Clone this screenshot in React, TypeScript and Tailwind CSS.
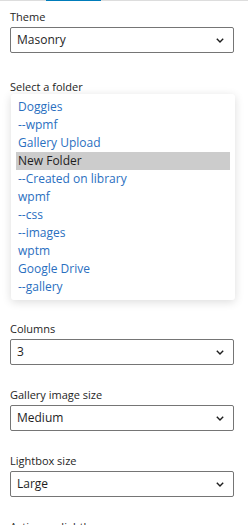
const folders = [
  'Doggies',
  '--wpmf',
  'Gallery Upload',
  'New Folder',
  '--Created on library',
  'wpmf',
  '--css',
  '--images',
  'wptm',
  'Google Drive',
  '--gallery',
]

function Chevron() {
  return (
    <svg width="8" height="5" viewBox="0 0 8 5" className="shrink-0">
      <path d="M0.8 0.8 L4 4 L7.2 0.8" fill="none" stroke="#1e1e1e" strokeWidth="1.4" />
    </svg>
  )
}

function SelectBox({ value }: { value: string }) {
  return (
    <div className="flex h-[26px] items-center justify-between rounded-[2px] border border-[#757575] bg-white pl-[6px] pr-[9px] text-[12px] text-[#1e1e1e]">
      <span>{value}</span>
      <Chevron />
    </div>
  )
}

function Label({ text, className = '' }: { text: string; className?: string }) {
  return <div className={`h-4 text-[11px] leading-4 text-[#1e1e1e] ${className}`}>{text}</div>
}

export default function App() {
  const selected = 'New Folder'
  return (
    <div className="h-[525px] w-[248px] overflow-hidden bg-white font-['Open_Sans',sans-serif]">
      <div className="flex h-px">
        <div className="w-[46px] bg-[#dddddd]" />
        <div className="w-[55px] bg-[#007cba]" />
        <div className="flex-1 bg-[#dddddd]" />
      </div>
      <div className="pl-[10px] pr-[14px] pt-[8px]">
        <Label text="Theme" className="mb-[2px]" />
        <SelectBox value="Masonry" />

        <Label text="Select a folder" className="mt-[26px]" />
        <div className="-mt-px ml-px mr-[-1px] rounded-[3px] bg-white px-[5px] py-[4px] shadow-[0_2px_10px_rgba(0,0,0,0.14)]">
          {folders.map((f) => (
            <div
              key={f}
              className={`h-[18px] pl-[2px] text-[12px] leading-[18px] ${
                f === selected ? 'bg-[#cccccc] text-[#1e1e1e]' : 'text-[#2a6fbf]'
              }`}
            >
              {f}
            </div>
          ))}
        </div>

        <Label text="Columns" className="mt-[21px] mb-[2px]" />
        <SelectBox value="3" />

        <Label text="Gallery image size" className="mt-[22px] mb-[2px]" />
        <SelectBox value="Medium" />

        <Label text="Lightbox size" className="mt-[22px] mb-[2px]" />
        <SelectBox value="Large" />

        <Label text="Action on lightbox" className="mt-[22px]" />
      </div>
    </div>
  )
}
